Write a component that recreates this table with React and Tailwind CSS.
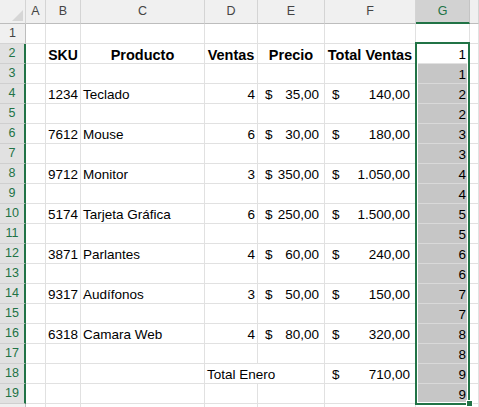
import React from 'react';

// Excel-style sheet: columns A..G, rows 1..20
const GREEN = '#217346';

const products = [
  { row: 4, sku: '1234', name: 'Teclado', qty: '4', price: '35,00', total: '140,00' },
  { row: 6, sku: '7612', name: 'Mouse', qty: '6', price: '30,00', total: '180,00' },
  { row: 8, sku: '9712', name: 'Monitor', qty: '3', price: '350,00', total: '1.050,00' },
  { row: 10, sku: '5174', name: 'Tarjeta Gráfica', qty: '6', price: '250,00', total: '1.500,00' },
  { row: 12, sku: '3871', name: 'Parlantes', qty: '4', price: '60,00', total: '240,00' },
  { row: 14, sku: '9317', name: 'Audífonos', qty: '3', price: '50,00', total: '150,00' },
  { row: 16, sku: '6318', name: 'Camara Web', qty: '4', price: '80,00', total: '320,00' },
];

const cols = ['A', 'B', 'C', 'D', 'E', 'F', 'G', 'H'];
const rows = Array.from({ length: 20 }, (_, i) => i + 1);

function Money({ v }) {
  return (
    <div className="flex w-full justify-between pl-[7px] pr-[5px]">
      <span>$</span>
      <span>{v}</span>
    </div>
  );
}

function Bold({ children }) {
  return <div className="w-full text-center font-bold text-[14.5px]">{children}</div>;
}

function content(r, c) {
  const p = products.find((x) => x.row === r);
  if (c === 'G' && r >= 2 && r <= 19) return <div className="w-full text-right pr-[3px]">{Math.floor(r / 2)}</div>;
  if (r === 2) {
    if (c === 'B') return <div className="w-full text-center font-bold text-[14px]">SKU</div>;
    if (c === 'C') return <Bold>Producto</Bold>;
    if (c === 'D') return <Bold>Ventas</Bold>;
    if (c === 'E') return <Bold>Precio</Bold>;
    if (c === 'F') return <Bold>Total Ventas</Bold>;
  }
  if (p) {
    if (c === 'B') return <div className="w-full text-right pr-[2px]">{p.sku}</div>;
    if (c === 'C') return <div className="pl-[2px]">{p.name}</div>;
    if (c === 'D') return <div className="w-full text-right pr-[2px]">{p.qty}</div>;
    if (c === 'E') return <Money v={p.price} />;
    if (c === 'F') return <Money v={p.total} />;
  }
  if (r === 18) {
    if (c === 'D') return <div className="pl-[2px]">Total Enero</div>;
    if (c === 'F') return <Money v="710,00" />;
  }
  return null;
}

export default function App() {
  return (
    <div
      className="relative w-[479px] h-[407px] overflow-hidden bg-white text-black text-[13.5px]"
      style={{ fontFamily: '"Liberation Sans", Arial, sans-serif' }}
    >
      <div className="grid grid-cols-[26px_20px_35px_124px_53px_67px_91px_54px_9px] grid-rows-[24px_repeat(20,20px)]">
        {/* corner */}
        <div className="relative bg-[#f0f0f0] border-r border-b border-r-[#d4d4d4] border-b-[#bdbdbd]">
          <svg className="absolute right-[2px] bottom-[2px]" width="11" height="11" viewBox="0 0 11 11">
            <polygon points="11,0 11,11 0,11" fill="#d6d6d6" />
          </svg>
        </div>
        {cols.map((c) =>
          c === 'G' ? (
            <div
              key={c}
              className="flex items-center justify-center bg-[#d2d2d2] border-r border-r-[#c4c4c4] border-b-2 border-b-[#217346] text-[#217346] text-[12.5px]"
            >
              {c}
            </div>
          ) : (
            <div
              key={c}
              className="flex items-center justify-center bg-[#f0f0f0] border-r border-b border-r-[#d4d4d4] border-b-[#bdbdbd] text-[#444] text-[12.5px]"
            >
              {c === 'H' ? '' : c}
            </div>
          )
        )}

        {rows.map((r) => (
          <React.Fragment key={r}>
            {r >= 2 && r <= 19 ? (
              <div className="flex items-center justify-center bg-[#e1e1e1] border-b border-b-[#cfcfcf] border-r-2 border-r-[#217346] text-[#217346] text-[12.5px]">
                {r}
              </div>
            ) : (
              <div className="flex items-center justify-center bg-[#f0f0f0] border-b border-r border-b-[#d4d4d4] border-r-[#bdbdbd] text-[#444] text-[12.5px]">
                {r === 20 ? '' : r}
              </div>
            )}
            {cols.map((c) => {
              const selected = c === 'G' && r >= 3 && r <= 19;
              const overflow = r === 18 && c === 'D';
              let cls = 'flex items-end leading-[16px] whitespace-nowrap border-b';
              if (overflow) cls += ' relative z-10 overflow-visible border-b-[#e1e1e1]';
              else cls += ' overflow-hidden border-r border-[#e1e1e1]';
              if (selected) cls += ' bg-[#c6c6c6] border-b-[#d9d9d9]';
              return (
                <div key={c} className={cls}>
                  {content(r, c)}
                </div>
              );
            })}
          </React.Fragment>
        ))}
      </div>

      {/* selection G2:G19 */}
      <div className="absolute left-[415px] top-[42px] w-[55px] h-[363px] border-2 border-[#217346]">
        <div className="absolute inset-0 border border-white" />
      </div>
      <div className="absolute left-[466px] top-[400px] w-[7px] h-[7px] bg-[#217346] border border-white" />
    </div>
  );
}
